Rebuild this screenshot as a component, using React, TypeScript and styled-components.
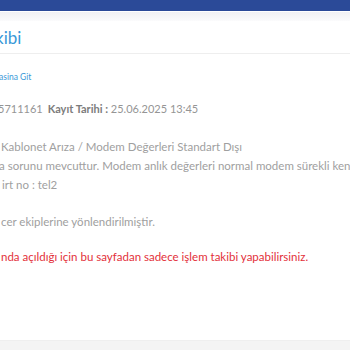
import React from "react";
import styled, { createGlobalStyle } from "styled-components";

const Global = createGlobalStyle`
  html, body { margin: 0; padding: 0; background: #ffffff; }
  body { font-family: Lato, "Open Sans", sans-serif; width: 350px; height: 350px; overflow: hidden; }
`;

const Page = styled.div`
  width: 350px;
  height: 350px;
  display: flex;
  flex-direction: column;
  overflow: hidden;
  background: #fff;
`;

const TopBar = styled.div`
  height: 11px;
  background: #2b4a98;
  flex: none;
`;

const Shadow = styled.div`
  height: 9px;
  background: linear-gradient(#f1f1f4, #fbfbfc);
  border-top: 1px solid #ffffff;
  flex: none;
`;

const TitleRow = styled.div`
  height: 32px;
  display: flex;
  align-items: center;
  border-bottom: 1px solid #eeeeee;
  flex: none;
`;

const Content = styled.div`
  flex: 1;
  display: flex;
  flex-direction: column;
  padding-top: 17px;
`;

const Line = styled.div<{ $indent?: number }>`
  white-space: nowrap;
  text-indent: ${(p) => p.$indent ?? 0}px;
`;

const Title = styled(Line)`
  font-size: 17px;
  color: #3a99d8;
  line-height: 20px;
  padding-top: 2px;
`;

const BackLink = styled(Line)`
  font-size: 8.5px;
  color: #3a99d8;
  line-height: 12px;
  margin-bottom: 17px;
`;

const Meta = styled(Line)`
  font-size: 11px;
  color: #959595;
  line-height: 18px;
  margin-bottom: 19px;
  b { color: #7c7c7c; font-weight: 700; margin-left: 5px; }
`;

const Body = styled(Line)`
  font-size: 11.5px;
  color: #a0a0a0;
  line-height: 19px;
`;

const Gap = styled.div<{ $h: number }>`
  height: ${(p) => p.$h}px;
`;

const Warning = styled(Line)`
  font-size: 11.5px;
  color: #e3303a;
  line-height: 19px;
`;

const Footer = styled.div`
  height: 9px;
  background: #f4f4f4;
  border-top: 1px solid #efefef;
  flex: none;
`;

export default function App() {
  return (
    <>
      <Global />
      <Page>
        <TopBar />
        <Shadow />
        <TitleRow>
          <Title $indent={-5}>kibi</Title>
        </TitleRow>
        <Content>
          <BackLink $indent={-1}>asina Git</BackLink>
          <Meta $indent={-2}>
            5711161<b>Kayıt Tarihi :</b> 25.06.2025 13:45
          </Meta>
          <Body $indent={1}>Kablonet Arıza / Modem Değerleri Standart Dışı</Body>
          <Body $indent={-1}>a sorunu mevcuttur. Modem anlık değerleri normal modem sürekli kendini</Body>
          <Body $indent={2}>irt no : tel2</Body>
          <Gap $h={18} />
          <Body $indent={1}>cer ekiplerine yönlendirilmiştir.</Body>
          <Gap $h={16} />
          <Warning $indent={1}>nda açıldığı için bu sayfadan sadece işlem takibi yapabilirsiniz.</Warning>
        </Content>
        <Footer />
      </Page>
    </>
  );
}
